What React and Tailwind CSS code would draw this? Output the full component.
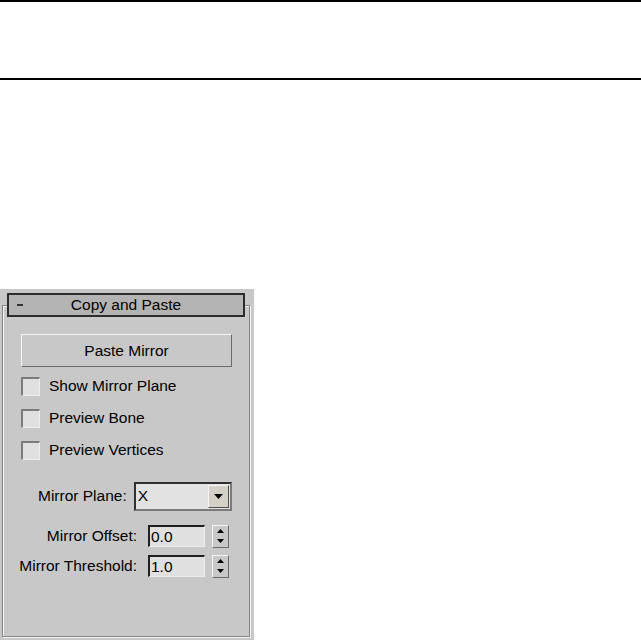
import React from "react";

const font = { fontFamily: '"Liberation Sans", Arial, sans-serif' };

const Check = ({ label }) => (
  <div className="flex items-center h-[32px]">
    <div className="w-[19px] h-[19px] bg-[#e0e0e0] border-t-2 border-l-2 border-[#7c7c7c] border-r border-b border-r-[#ececec] border-b-[#ececec]" />
    <span className="ml-[9px]">{label}</span>
  </div>
);

const Spinner = () => (
  <div className="w-[17px] h-[23px] flex flex-col bg-[#c8c8c8] border border-t-[#f4f4f4] border-l-[#f4f4f4] border-r-[#6a6a6a] border-b-[#6a6a6a]">
    <div className="flex-1 flex items-center justify-center">
      <svg width="7" height="4" viewBox="0 0 7 4"><path d="M3.5 0 L7 4 L0 4 Z" fill="#000" /></svg>
    </div>
    <div className="flex-1 flex items-center justify-center">
      <svg width="7" height="4" viewBox="0 0 7 4"><path d="M0 0 L7 0 L3.5 4 Z" fill="#000" /></svg>
    </div>
  </div>
);

const NumField = ({ label, value }) => (
  <div className="flex items-center h-[30px]">
    <span className="w-[134px] text-right">{label}</span>
    <div className="ml-[11px] w-[57px] h-[22px] bg-[#e0e0e0] border-t-2 border-l-2 border-[#202020] border-r border-b border-r-[#ececec] border-b-[#ececec] flex items-center pl-[1px] leading-none">
      {value}
    </div>
    <div className="ml-[7px]"><Spinner /></div>
  </div>
);

export default function App() {
  return (
    <div className="bg-white w-[641px] h-[640px] text-black text-[15.5px]" style={font}>
      <div className="h-[80px] border-t-2 border-b-2 border-black" />
      <div className="mt-[209px] w-[254px] h-[351px] bg-[#c8c8c8] pt-[16px]">
        <div className="ml-[2px] w-[248px] h-[332px] border border-[#848484] shadow-[inset_1px_1px_0_#f4f4f4,1px_1px_0_#f4f4f4]">
          <div className="-mt-[13px] ml-[4px] w-[238px] h-[24px] bg-[#b4b4b4] border-2 border-[#2c2c2c] flex items-center relative">
            <span className="absolute left-[8px] top-[9px] w-[6px] h-[2px] bg-[#333]" />
            <span className="flex-1 text-center leading-none">Copy and Paste</span>
          </div>
          <div className="ml-[18px] mt-[17px] w-[211px] h-[33px] bg-[#c8c8c8] border border-t-[#f4f4f4] border-l-[#f4f4f4] border-r-[#6a6a6a] border-b-[#6a6a6a] flex items-center justify-center">
            Paste Mirror
          </div>
          <div className="ml-[18px] mt-[3px]">
            <Check label="Show Mirror Plane" />
            <Check label="Preview Bone" />
            <Check label="Preview Vertices" />
          </div>
          <div className="flex items-center mt-[15px] h-[30px]">
            <span className="ml-[35px]">Mirror Plane:</span>
            <div className="ml-[7px] w-[98px] h-[29px] bg-[#e2e2e2] border-t-2 border-l-2 border-[#303030] border-r-2 border-b-2 border-r-[#7a7a7a] border-b-[#7a7a7a] flex items-center">
              <span className="pl-[2px] flex-1">X</span>
              <div className="w-[21px] h-[23px] mr-[1px] bg-[#d4d0c8] border border-t-[#f4f4f4] border-l-[#f4f4f4] border-r-[#505050] border-b-[#505050] flex items-center justify-center">
                <svg width="9" height="5" viewBox="0 0 9 5"><path d="M0 0 L9 0 L4.5 5 Z" fill="#000" /></svg>
              </div>
            </div>
          </div>
          <div className="mt-[10px]">
            <NumField label="Mirror Offset:" value="0.0" />
            <NumField label="Mirror Threshold:" value="1.0" />
          </div>
        </div>
      </div>
    </div>
  );
}
